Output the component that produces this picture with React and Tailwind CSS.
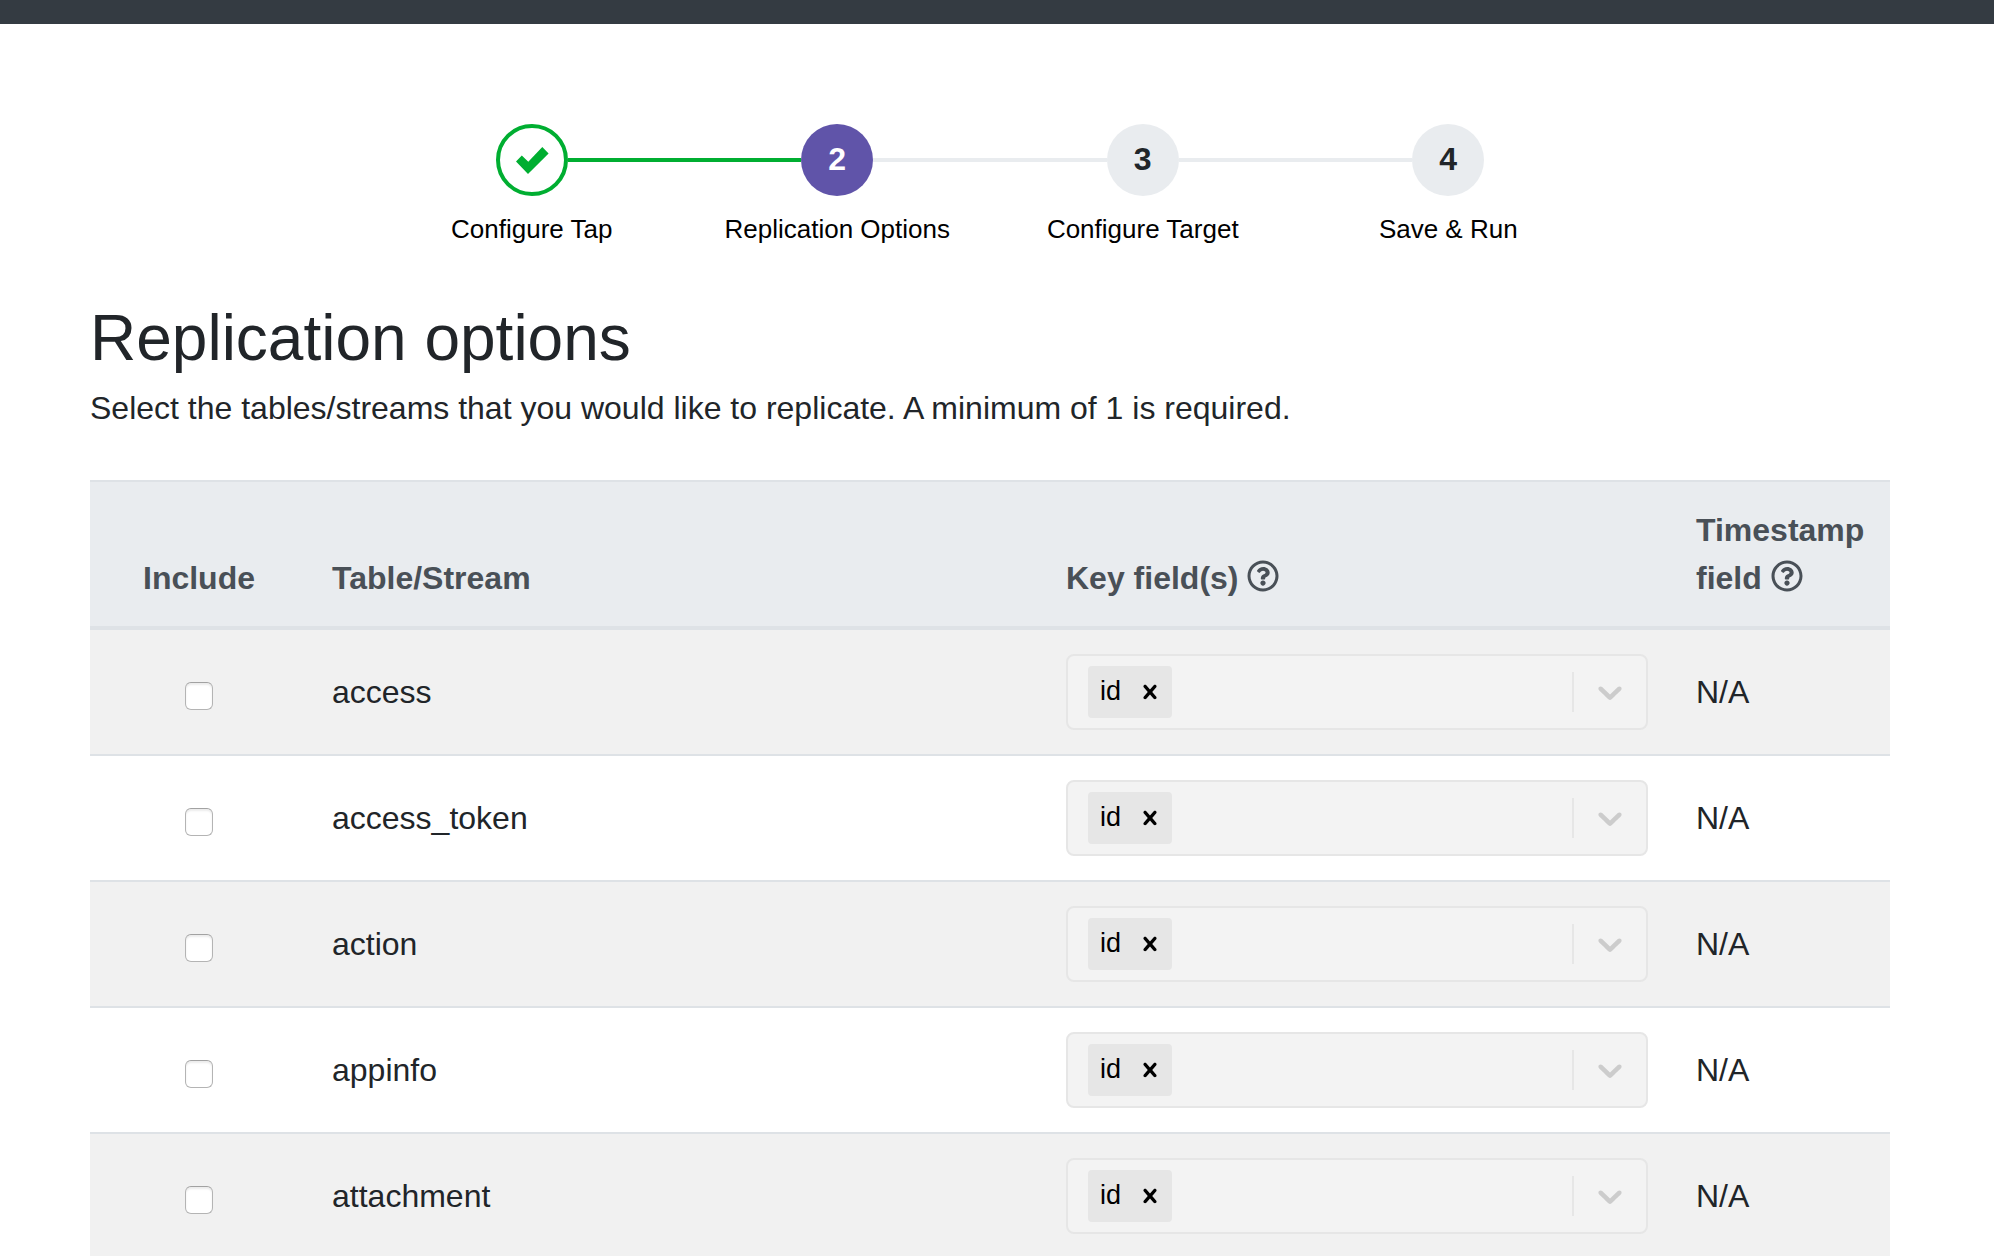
import { FaRegQuestionCircle } from "react-icons/fa";

const STEPS = [
  { id: 1, label: "Configure Tap", state: "done" },
  { id: 2, label: "Replication Options", state: "current" },
  { id: 3, label: "Configure Target", state: "todo" },
  { id: 4, label: "Save & Run", state: "todo" },
];

const STREAMS = ["access", "access_token", "action", "appinfo", "attachment"];

const CIRCLE = {
  done: "border-4 border-[#00ae31] bg-white text-[#00ae31]",
  current: "bg-[#6054a9] pb-0.5 text-white",
  todo: "bg-[#e9ecef] pb-0.5 text-[#212529]",
};

function CheckIcon() {
  return (
    <svg viewBox="0 0 34 28" className="h-7 w-[34px]" fill="currentColor" aria-hidden="true">
      <path d="M33.6 7.4 13 28 1 15.6 6.8 9.4 13.3 15.8 27.3 1z" />
    </svg>
  );
}

function CrossIcon() {
  return (
    <svg viewBox="0 0 20 20" className="size-7" fill="currentColor" aria-hidden="true">
      <path d="M14.348 14.849c-0.469 0.469-1.229 0.469-1.697 0l-2.651-3.030-2.651 3.029c-0.469 0.469-1.229 0.469-1.697 0-0.469-0.469-0.469-1.229 0-1.697l2.758-3.15-2.759-3.152c-0.469-0.469-0.469-1.228 0-1.697s1.228-0.469 1.697 0l2.652 3.031 2.651-3.031c0.469-0.469 1.228-0.469 1.697 0s0.469 1.229 0 1.697l-2.758 3.152 2.758 3.15c0.469 0.469 0.469 1.229 0 1.698z" />
    </svg>
  );
}

function ChevronIcon() {
  return (
    <svg viewBox="0 0 20 20" className="size-10" fill="currentColor" aria-hidden="true">
      <path d="M4.516 7.548c0.436-0.446 1.043-0.481 1.576 0l3.908 3.747 3.908-3.747c0.533-0.481 1.141-0.446 1.574 0 0.436 0.445 0.408 1.197 0 1.615-0.406 0.418-4.695 4.502-4.695 4.502-0.217 0.223-0.502 0.335-0.787 0.335s-0.57-0.112-0.789-0.335c0 0-4.287-4.084-4.695-4.502s-0.436-1.17 0-1.615z" />
    </svg>
  );
}

function Stepper() {
  return (
    <ol className="mx-auto grid w-full max-w-[1222px] grid-cols-4">
      {STEPS.map((step, i) => (
        <li key={step.id} className="flex flex-col items-center">
          <div className="flex w-full items-center">
            <span
              className={`h-1 flex-1 ${
                i === 0 ? "" : STEPS[i - 1].state === "done" ? "bg-[#00ae31]" : "bg-[#e9ecef]"
              }`}
            />
            <span
              className={`flex size-[72px] items-center justify-center rounded-full text-[32px] leading-[48px] font-bold ${CIRCLE[step.state]}`}
            >
              {step.state === "done" ? <CheckIcon /> : step.id}
            </span>
            <span
              className={`h-1 flex-1 ${
                i === STEPS.length - 1 ? "" : step.state === "done" ? "bg-[#00ae31]" : "bg-[#e9ecef]"
              }`}
            />
          </div>
          <span className="mt-4 text-[26px] leading-[34px] text-black">{step.label}</span>
        </li>
      ))}
    </ol>
  );
}

function KeySelect({ stream }) {
  return (
    <div
      role="group"
      aria-label={`Key fields for ${stream}`}
      className="flex rounded-lg border-2 border-[#e6e6e6] bg-[#f3f3f3]"
    >
      <div className="flex flex-1 items-center py-2.5 pl-5">
        <span className="flex rounded-sm bg-[#e6e6e6] text-black">
          <span className="pt-1.5 pr-[7px] pb-2 pl-3 text-[27px] leading-[38px]">id</span>
          <button type="button" aria-label="Remove id" className="flex items-center px-2">
            <CrossIcon />
          </button>
        </span>
      </div>
      <span className="my-4 w-0.5 bg-[#e6e6e6]" />
      <button type="button" aria-label="Open options" className="p-4 text-[#cccccc]">
        <ChevronIcon />
      </button>
    </div>
  );
}

function HelpButton({ label }) {
  return (
    <button type="button" aria-label={label} className="inline-block align-[-3px]">
      <FaRegQuestionCircle className="size-8" />
    </button>
  );
}

export default function App() {
  return (
    <div className="h-screen overflow-hidden bg-white font-['Liberation_Sans',Arial,sans-serif] text-[32px] leading-[48px] text-[#212529]">
      <header className="h-6 bg-[#343b42]" />
      <main className="pt-[100px] pr-[104px] pl-[90px]">
        <Stepper />
        <h1 className="mt-[54px] text-[64px] leading-[76px]">Replication options</h1>
        <p className="mt-2">
          Select the tables/streams that you would like to replicate. A minimum of 1 is required.
        </p>
        <table className="mt-12 w-full table-fixed border-separate border-spacing-0">
          <thead className="bg-[#e9ecef] text-left align-bottom text-[#495057]">
            <tr>
              <th className="w-[218px] border-t-2 border-b-4 border-[#dee2e6] p-6 text-center">Include</th>
              <th className="border-t-2 border-b-4 border-[#dee2e6] p-6">Table/Stream</th>
              <th className="w-[35%] border-t-2 border-b-4 border-[#dee2e6] p-6">
                Key field(s) <HelpButton label="About key fields" />
              </th>
              <th className="w-[218px] border-t-2 border-b-4 border-[#dee2e6] p-6">
                Timestamp field <HelpButton label="About timestamp field" />
              </th>
            </tr>
          </thead>
          <tbody className="align-middle">
            {STREAMS.map((name) => (
              <tr
                key={name}
                className="odd:bg-[#f1f1f1] [&>td]:border-t-2 [&>td]:border-[#dee2e6] first:[&>td]:border-t-0"
              >
                <td className="p-6">
                  <input
                    id={`include-${name}`}
                    type="checkbox"
                    className="mx-auto mt-2 block size-7 appearance-none rounded-md border border-[#b4b4b4] border-t-[#a2a2a2] bg-white shadow-[inset_0_2px_2px_#ececec] checked:bg-[#6054a9]"
                  />
                </td>
                <td className="p-6">
                  <label htmlFor={`include-${name}`}>{name}</label>
                </td>
                <td className="p-6">
                  <KeySelect stream={name} />
                </td>
                <td className="p-6">N/A</td>
              </tr>
            ))}
          </tbody>
        </table>
      </main>
    </div>
  );
}
